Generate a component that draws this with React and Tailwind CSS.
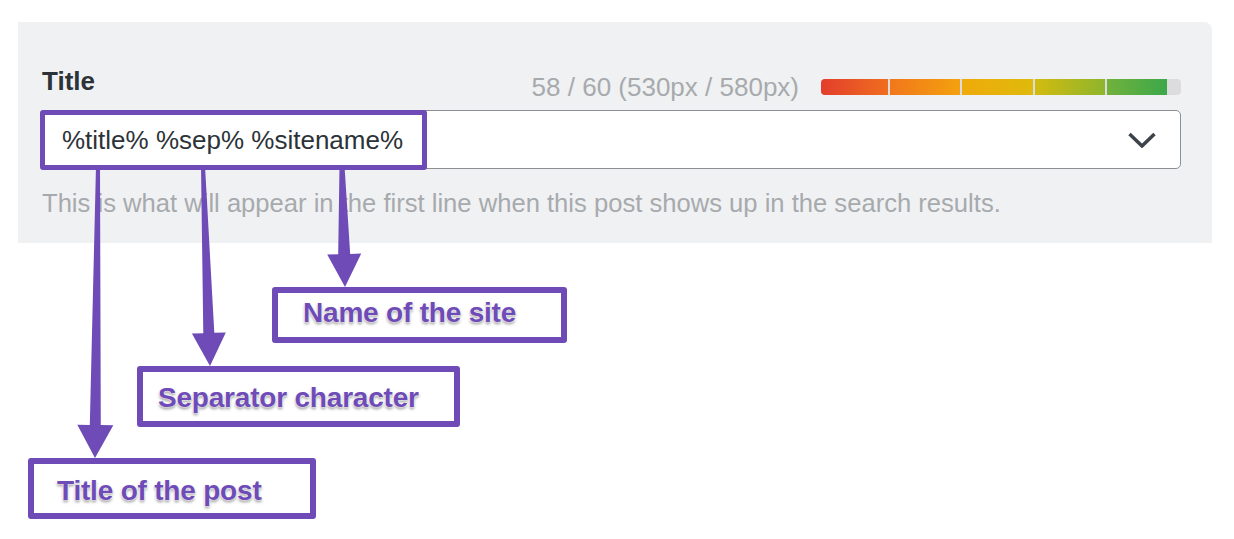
import React from "react";

// tapered arrow: thin at the top, wider near the head
const arrowPoints = (x1, y1, x2, y2, w1, w2, headW, headL) => {
  const dx = x2 - x1;
  const dy = y2 - y1;
  const len = Math.sqrt(dx * dx + dy * dy);
  const ux = dx / len;
  const uy = dy / len;
  const nx = -uy;
  const ny = ux;
  const bx = x2 - ux * headL;
  const by = y2 - uy * headL;
  const pts = [
    [x1 + (nx * w1) / 2, y1 + (ny * w1) / 2],
    [bx + (nx * w2) / 2, by + (ny * w2) / 2],
    [bx + (nx * headW) / 2, by + (ny * headW) / 2],
    [x2, y2],
    [bx - (nx * headW) / 2, by - (ny * headW) / 2],
    [bx - (nx * w2) / 2, by - (ny * w2) / 2],
    [x1 - (nx * w1) / 2, y1 - (ny * w1) / 2],
  ];
  return pts.map((p) => p.map((v) => v.toFixed(1)).join(",")).join(" ");
};

const arrows = [
  { x1: 98, y1: 166, x2: 95, y2: 458, w1: 4, w2: 11, headW: 36, headL: 33 },
  { x1: 203, y1: 166, x2: 210, y2: 366, w1: 4, w2: 11, headW: 34, headL: 33 },
  { x1: 342, y1: 166, x2: 345, y2: 287, w1: 5, w2: 12, headW: 34, headL: 33 },
];

const segments = [
  { w: "w-[67px]", bg: "bg-[linear-gradient(90deg,#e33e2c,#f06e1f)]" },
  { w: "w-[70px]", bg: "bg-[linear-gradient(90deg,#f2771b,#f3a10f)]" },
  { w: "w-[71px]", bg: "bg-[linear-gradient(90deg,#efaa0a,#dfba0c)]" },
  { w: "w-[70px]", bg: "bg-[linear-gradient(90deg,#d3bb0f,#8eb52d)]" },
  { w: "w-[60px]", bg: "bg-[linear-gradient(90deg,#71b13b,#3ca84a)]" },
];

const labelText =
  "font-bold text-[28px] leading-none tracking-[-0.2px] text-[#6e4bb7] [text-shadow:0_0_2px_#fff,0_0_2px_#fff,0_2px_3px_rgba(0,0,0,0.45)]";

const App = () => {
  return (
    <div className="relative w-[1234px] h-[539px] overflow-hidden bg-white font-['Liberation_Sans',Arial,sans-serif]">
      {/* Settings panel */}
      <div className="pt-[22px] pl-[18px] w-[1212px]">
        <div className="h-[221px] rounded-tr-[8px] bg-[#f0f1f3] pt-[44px] pl-[22px] pr-[31px]">
          <div className="flex h-[44px] items-start">
            <div className="ml-[2px] text-[26px] leading-[30px] font-bold text-[#2c3338]">Title</div>
            <div className="ml-auto mt-[6px] flex items-center">
              <span className="text-[26px] leading-[30px] text-[#a7aaad]">58 / 60 (530px / 580px)</span>
              <div className="ml-[22px] -mt-[1px] flex h-[16px] w-[360px] overflow-hidden rounded-[4px] bg-[#dcdcde]">
                <div className="flex gap-[2px]">
                  {segments.map((s, i) => (
                    <div key={i} className={`h-full ${s.w} ${s.bg}`} />
                  ))}
                </div>
              </div>
            </div>
          </div>

          <div className="flex h-[59px] items-center rounded-[5px] border border-[#8c8f94] bg-white pl-[21px] pr-[24px]">
            <span className="text-[26px] leading-[30px] text-[#2c3338]">%title% %sep% %sitename%</span>
            <svg className="ml-auto" width="28" height="16" viewBox="0 0 28 16">
              <polyline points="1.5,2 14,14 26.5,2" fill="none" stroke="#3c434a" strokeWidth="3.5" />
            </svg>
          </div>

          <p className="mt-[19px] ml-[2px] text-[25.6px] leading-[30px] text-[#a7aaad]">
            This is what will appear in the first line when this post shows up in the search results.
          </p>
        </div>
      </div>

      {/* Annotations */}
      <div className="absolute left-[40px] top-[110px] h-[60px] w-[387px] rounded-[3px] border-[5px] border-[#6e4bb7]" />

      <svg className="absolute inset-0" width="1234" height="539">
        {arrows.map((a, i) => (
          <polygon
            key={i}
            points={arrowPoints(a.x1, a.y1, a.x2, a.y2, a.w1, a.w2, a.headW, a.headL)}
            fill="#6e4bb7"
          />
        ))}
      </svg>

      <div className="absolute left-[272px] top-[287px] h-[56px] w-[295px] rounded-[3px] border-[6px] border-[#6e4bb7] bg-white pl-[25px] pt-[6px]">
        <div className={labelText}>Name of the site</div>
      </div>

      <div className="absolute left-[137px] top-[366px] h-[61px] w-[323px] rounded-[3px] border-[6px] border-[#6e4bb7] bg-white pl-[15px] pt-[12px]">
        <div className={labelText}>Separator character</div>
      </div>

      <div className="absolute left-[28px] top-[458px] h-[61px] w-[288px] rounded-[3px] border-[6px] border-[#6e4bb7] bg-white pl-[23px] pt-[13px]">
        <div className={labelText}>Title of the post</div>
      </div>
    </div>
  );
};

export default App;
